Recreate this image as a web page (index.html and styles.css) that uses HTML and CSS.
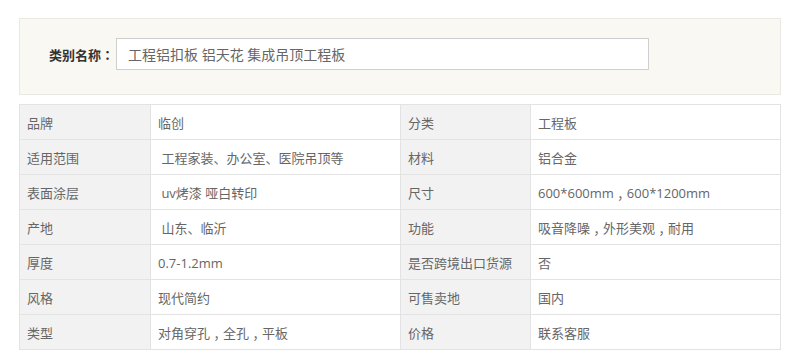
FILE: index.html
```html
<!DOCTYPE html>
<html lang="zh-CN">
<head>
<meta charset="utf-8">
<link rel="stylesheet" href="styles.css">
</head>
<body>
<div class="page">
  <div class="category">
    <span class="cat-label">类别名称<span class="pc" lang="zh-TW">：</span></span>
    <div class="cat-input">工程铝扣板 铝天花 集成吊顶工程板</div>
  </div>
  <div class="attrs">
    <div class="k">品牌</div><div class="v">临创</div><div class="k">分类</div><div class="v">工程板</div>
    <div class="k">适用范围</div><div class="v">&nbsp;工程家装、办公室、医院吊顶等</div><div class="k">材料</div><div class="v">铝合金</div>
    <div class="k">表面涂层</div><div class="v">&nbsp;uv烤漆 哑白转印</div><div class="k">尺寸</div><div class="v">600*600mm<span class="pm" lang="zh-TW">，</span>600*1200mm</div>
    <div class="k">产地</div><div class="v">&nbsp;山东、临沂</div><div class="k">功能</div><div class="v">吸音降噪<span class="pm" lang="zh-TW">，</span>外形美观<span class="pm" lang="zh-TW">，</span>耐用</div>
    <div class="k">厚度</div><div class="v">0.7-1.2mm</div><div class="k">是否跨境出口货源</div><div class="v">否</div>
    <div class="k">风格</div><div class="v">现代简约</div><div class="k">可售卖地</div><div class="v">国内</div>
    <div class="k">类型</div><div class="v">对角穿孔<span class="pm" lang="zh-TW">，</span>全孔<span class="pm" lang="zh-TW">，</span>平板</div><div class="k">价格</div><div class="v">联系客服</div>
  </div>
</div>
</body>
</html>
```

FILE: styles.css
```css
html, body {
  margin: 0;
  padding: 0;
  background: #ffffff;
}
body {
  font-family: "Open Sans", "Noto Sans CJK SC", sans-serif;
  color: #666666;
}
.pc {
  font-family: "Noto Sans CJK TC", sans-serif;
}
.pm {
  font-family: "Noto Sans CJK TC", sans-serif;
  line-height: 1;
  vertical-align: -5px;
}
.page {
  padding: 18px 0 0 19px;
  width: 762px;
}
.category {
  box-sizing: border-box;
  width: 762px;
  height: 77px;
  background: #faf8f3;
  border: 1px solid #ebe8e2;
  display: flex;
  align-items: flex-start;
  padding: 19px 0 0 29px;
}
.cat-label {
  font-size: 13px;
  font-weight: bold;
  color: #333333;
  width: 67px;
  height: 32px;
  line-height: 34px;
  white-space: nowrap;
}
.cat-input {
  box-sizing: border-box;
  width: 533px;
  height: 32px;
  background: #ffffff;
  border: 1px solid #cfcfcf;
  font-size: 14px;
  color: #666666;
  line-height: 32px;
  padding-left: 11px;
}
.attrs {
  margin-top: 9px;
  width: 762px;
  box-sizing: border-box;
  display: grid;
  grid-template-columns: 130px 249px 129px 249px;
  grid-auto-rows: 34px;
  gap: 1px;
  padding: 1px;
  background: #e3e3e3;
}
.k, .v {
  font-size: 13px;
  line-height: 36px;
  padding-left: 7px;
  white-space: nowrap;
  overflow: hidden;
}
.k {
  background: #f2f2f2;
}
.v {
  background: #ffffff;
}
```
